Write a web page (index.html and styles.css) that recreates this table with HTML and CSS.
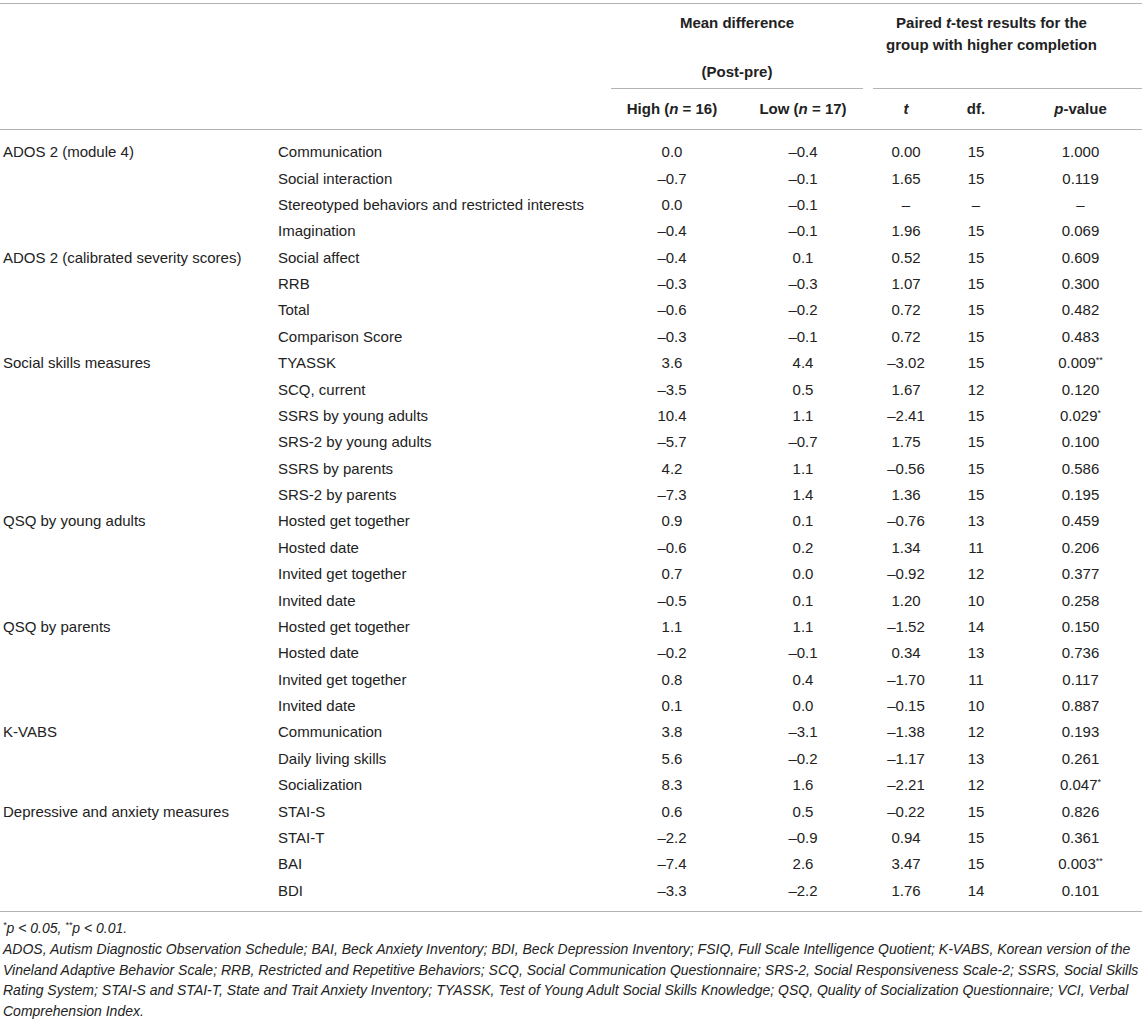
FILE: index.html
```html
<!DOCTYPE html>
<html lang="en">
<head>
<meta charset="utf-8">
<title>Table</title>
<link rel="stylesheet" href="styles.css">
</head>
<body>
<div class="page">
<table class="data">
  <colgroup>
    <col class="c-group">
    <col class="c-measure">
    <col class="c-high">
    <col class="c-low">
    <col class="c-t">
    <col class="c-df">
    <col class="c-p">
  </colgroup>
  <thead>
    <tr class="hrow1">
      <th rowspan="2"></th>
      <th rowspan="2"></th>
      <th colspan="2" class="grp-cell">
        <div class="grp grp-mean">
          <div class="grp-title">Mean difference</div>
          <div class="grp-sub">(Post-pre)</div>
        </div>
      </th>
      <th colspan="3" class="grp-cell">
        <div class="grp grp-paired">
          <div class="grp-title">Paired <i>t</i>-test results for the<br>group with higher completion</div>
        </div>
      </th>
    </tr>
    <tr class="hrow2">
      <th>High (<i>n</i> = 16)</th>
      <th>Low (<i>n</i> = 17)</th>
      <th><i>t</i></th>
      <th>df.</th>
      <th class="pcol"><i>p</i>-value</th>
    </tr>
  </thead>
  <tbody>
    <tr><td class="grp-name">ADOS 2 (module 4)</td><td>Communication</td><td>0.0</td><td>–0.4</td><td>0.00</td><td>15</td><td class="pcol">1.000</td></tr>
    <tr><td class="grp-name"></td><td>Social interaction</td><td>–0.7</td><td>–0.1</td><td>1.65</td><td>15</td><td class="pcol">0.119</td></tr>
    <tr><td class="grp-name"></td><td>Stereotyped behaviors and restricted interests</td><td>0.0</td><td>–0.1</td><td>–</td><td>–</td><td class="pcol">–</td></tr>
    <tr><td class="grp-name"></td><td>Imagination</td><td>–0.4</td><td>–0.1</td><td>1.96</td><td>15</td><td class="pcol">0.069</td></tr>
    <tr><td class="grp-name">ADOS 2 (calibrated severity scores)</td><td>Social affect</td><td>–0.4</td><td>0.1</td><td>0.52</td><td>15</td><td class="pcol">0.609</td></tr>
    <tr><td class="grp-name"></td><td>RRB</td><td>–0.3</td><td>–0.3</td><td>1.07</td><td>15</td><td class="pcol">0.300</td></tr>
    <tr><td class="grp-name"></td><td>Total</td><td>–0.6</td><td>–0.2</td><td>0.72</td><td>15</td><td class="pcol">0.482</td></tr>
    <tr><td class="grp-name"></td><td>Comparison Score</td><td>–0.3</td><td>–0.1</td><td>0.72</td><td>15</td><td class="pcol">0.483</td></tr>
    <tr><td class="grp-name">Social skills measures</td><td>TYASSK</td><td>3.6</td><td>4.4</td><td>–3.02</td><td>15</td><td class="pcol">0.009<sup>**</sup></td></tr>
    <tr><td class="grp-name"></td><td>SCQ, current</td><td>–3.5</td><td>0.5</td><td>1.67</td><td>12</td><td class="pcol">0.120</td></tr>
    <tr><td class="grp-name"></td><td>SSRS by young adults</td><td>10.4</td><td>1.1</td><td>–2.41</td><td>15</td><td class="pcol">0.029<sup>*</sup></td></tr>
    <tr><td class="grp-name"></td><td>SRS-2 by young adults</td><td>–5.7</td><td>–0.7</td><td>1.75</td><td>15</td><td class="pcol">0.100</td></tr>
    <tr><td class="grp-name"></td><td>SSRS by parents</td><td>4.2</td><td>1.1</td><td>–0.56</td><td>15</td><td class="pcol">0.586</td></tr>
    <tr><td class="grp-name"></td><td>SRS-2 by parents</td><td>–7.3</td><td>1.4</td><td>1.36</td><td>15</td><td class="pcol">0.195</td></tr>
    <tr><td class="grp-name">QSQ by young adults</td><td>Hosted get together</td><td>0.9</td><td>0.1</td><td>–0.76</td><td>13</td><td class="pcol">0.459</td></tr>
    <tr><td class="grp-name"></td><td>Hosted date</td><td>–0.6</td><td>0.2</td><td>1.34</td><td>11</td><td class="pcol">0.206</td></tr>
    <tr><td class="grp-name"></td><td>Invited get together</td><td>0.7</td><td>0.0</td><td>–0.92</td><td>12</td><td class="pcol">0.377</td></tr>
    <tr><td class="grp-name"></td><td>Invited date</td><td>–0.5</td><td>0.1</td><td>1.20</td><td>10</td><td class="pcol">0.258</td></tr>
    <tr><td class="grp-name">QSQ by parents</td><td>Hosted get together</td><td>1.1</td><td>1.1</td><td>–1.52</td><td>14</td><td class="pcol">0.150</td></tr>
    <tr><td class="grp-name"></td><td>Hosted date</td><td>–0.2</td><td>–0.1</td><td>0.34</td><td>13</td><td class="pcol">0.736</td></tr>
    <tr><td class="grp-name"></td><td>Invited get together</td><td>0.8</td><td>0.4</td><td>–1.70</td><td>11</td><td class="pcol">0.117</td></tr>
    <tr><td class="grp-name"></td><td>Invited date</td><td>0.1</td><td>0.0</td><td>–0.15</td><td>10</td><td class="pcol">0.887</td></tr>
    <tr><td class="grp-name">K-VABS</td><td>Communication</td><td>3.8</td><td>–3.1</td><td>–1.38</td><td>12</td><td class="pcol">0.193</td></tr>
    <tr><td class="grp-name"></td><td>Daily living skills</td><td>5.6</td><td>–0.2</td><td>–1.17</td><td>13</td><td class="pcol">0.261</td></tr>
    <tr><td class="grp-name"></td><td>Socialization</td><td>8.3</td><td>1.6</td><td>–2.21</td><td>12</td><td class="pcol">0.047<sup>*</sup></td></tr>
    <tr><td class="grp-name">Depressive and anxiety measures</td><td>STAI-S</td><td>0.6</td><td>0.5</td><td>–0.22</td><td>15</td><td class="pcol">0.826</td></tr>
    <tr><td class="grp-name"></td><td>STAI-T</td><td>–2.2</td><td>–0.9</td><td>0.94</td><td>15</td><td class="pcol">0.361</td></tr>
    <tr><td class="grp-name"></td><td>BAI</td><td>–7.4</td><td>2.6</td><td>3.47</td><td>15</td><td class="pcol">0.003<sup>**</sup></td></tr>
    <tr><td class="grp-name"></td><td>BDI</td><td>–3.3</td><td>–2.2</td><td>1.76</td><td>14</td><td class="pcol">0.101</td></tr>
  </tbody>
</table>
<div class="notes">
  <p class="note"><sup>*</sup>p &lt; 0.05, <sup>**</sup>p &lt; 0.01.</p>
  <p class="note">ADOS, Autism Diagnostic Observation Schedule; BAI, Beck Anxiety Inventory; BDI, Beck Depression Inventory; FSIQ, Full Scale Intelligence Quotient; K-VABS, Korean version of the Vineland Adaptive Behavior Scale; RRB, Restricted and Repetitive Behaviors; SCQ, Social Communication Questionnaire; SRS-2, Social Responsiveness Scale-2; SSRS, Social Skills Rating System; STAI-S and STAI-T, State and Trait Anxiety Inventory; TYASSK, Test of Young Adult Social Skills Knowledge; QSQ, Quality of Socialization Questionnaire; VCI, Verbal Comprehension Index.</p>
</div>
</div>
</body>
</html>
```

FILE: styles.css
```css
html, body {
  margin: 0;
  padding: 0;
  background: #ffffff;
}

body {
  color: #222222;
  font-family: "Liberation Sans", Arial, Helvetica, sans-serif;
}

.page {
  width: 1142px;
  padding-top: 3px;
}

.data {
  width: 1142px;
  border-collapse: collapse;
  table-layout: fixed;
  font-size: 15px;
  border-top: 1px solid #b3b3b3;
}

.c-group { width: 278px; }
.c-measure { width: 333px; }
.c-high { width: 122px; }
.c-low { width: 140px; }
.c-t { width: 66px; }
.c-df { width: 74px; }
.c-p { width: 129px; }

.data thead {
  border-bottom: 1px solid #b3b3b3;
}

.data th {
  font-weight: bold;
  line-height: 22px;
  padding: 0;
  text-align: center;
  white-space: nowrap;
}

.grp-cell {
  vertical-align: top;
}

.grp {
  box-sizing: border-box;
  height: 85px;
  padding-top: 8px;
  border-bottom: 1px solid #b3b3b3;
  text-align: center;
}

.grp-mean {
  margin-right: 10px;
}

.grp-paired {
  padding-right: 32px;
}

.grp-sub {
  margin-top: 27px;
}

.hrow2 th {
  padding: 9px 0;
}

.data td {
  line-height: 18px;
  padding: 4.2px 0;
  text-align: center;
  white-space: nowrap;
}

.data td.grp-name {
  text-align: left;
  padding-left: 3px;
}

.data td:nth-child(2) {
  text-align: left;
}

.data .pcol {
  padding-left: 6px;
}

.data tbody tr:first-child td {
  padding-top: 13.2px;
}

.data tbody tr:last-child td {
  padding-bottom: 11.5px;
}

.data tbody {
  border-bottom: 1px solid #b3b3b3;
}

.data sup {
  font-size: 9px;
  line-height: 0;
  vertical-align: 5px;
}

.notes {
  margin-top: 6px;
  padding-left: 3px;
  font-size: 14px;
  font-style: italic;
  line-height: 20.7px;
}

.note {
  margin: 0;
}

.note sup {
  font-size: 9px;
  line-height: 0;
  vertical-align: 5px;
}
```
